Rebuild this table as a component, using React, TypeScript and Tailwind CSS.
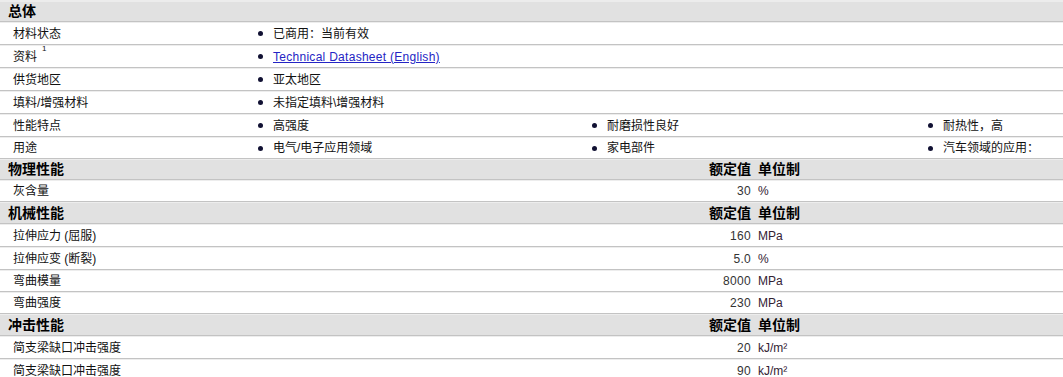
import React from "react";

const FONT = {
  fontFamily: '"Liberation Sans", Arial, "Noto Sans CJK SC", sans-serif',
};

function Dot() {
  return <span className="inline-block w-[5px] h-[5px] rounded-full bg-[#111133] mr-[10px] shrink-0" />;
}

function Row({ h, header, children }: { h: number; header?: boolean; children: React.ReactNode }) {
  return (
    <div className="flex flex-col">
      <div className="h-px bg-[#c3c3c3]" />
      <div className="h-px bg-[#ededed]" />
      <div
        className={`flex items-center ${header ? "bg-[#e1e1e1]" : "bg-white"}`}
        style={{ height: h - 2 }}
      >
        {children}
      </div>
    </div>
  );
}

function Label({ children }: { children: React.ReactNode }) {
  return <div className="w-[255px] shrink-0 pl-[13px] text-[12px] text-[#111]">{children}</div>;
}

function Bullets({ items }: { items: React.ReactNode[] }) {
  const widths = ["w-[334px]", "w-[336px]", "w-[138px]"];
  return (
    <div className="flex">
      {items.map((it, i) => (
        <div key={i} className={`${widths[i]} shrink-0 flex items-center pl-[3px] text-[12px] text-[#111]`}>
          <Dot />
          <span>{it}</span>
        </div>
      ))}
    </div>
  );
}

function SectionHeader({ title, h }: { title: string; h: number }) {
  return (
    <Row h={h} header>
      <div className="w-[255px] shrink-0 pl-[8px] text-[14px] font-bold text-black">{title}</div>
      <div className="flex text-[14px] font-bold text-black">
        <div className="w-[496px] text-right">额定值</div>
        <div className="pl-[7px]">单位制</div>
      </div>
    </Row>
  );
}

function PropRow({ label, value, unit, h }: { label: string; value: string; unit: React.ReactNode; h: number }) {
  return (
    <Row h={h}>
      <Label>{label}</Label>
      <div className="flex text-[12px] text-[#333]">
        <div className="w-[496px] text-right tracking-[0.3px]">{value}</div>
        <div className="pl-[7px] text-[#332233]">{unit}</div>
      </div>
    </Row>
  );
}

export default function App() {
  return (
    <div className="w-[1063px] h-[377px] overflow-hidden bg-white" style={FONT}>
      <div className="flex flex-col">
        <div className="h-[2px] bg-[#ececec]" />
        <div className="h-[19px] bg-[#e1e1e1] flex items-center">
          <div className="pl-[8px] text-[14px] font-bold text-black">总体</div>
        </div>
      </div>
      <Row h={23}>
        <Label>材料状态</Label>
        <Bullets items={["已商用：当前有效"]} />
      </Row>
      <Row h={23}>
        <Label>
          <span className="relative">
            资料
            <span className="absolute left-[29px] -top-[5px] text-[8px] leading-none">1</span>
          </span>
        </Label>
        <Bullets
          items={[
            <a href="#" className="text-[#2424c4] underline tracking-[0.28px]">
              Technical Datasheet (English)
            </a>,
          ]}
        />
      </Row>
      <Row h={23}>
        <Label>供货地区</Label>
        <Bullets items={["亚太地区"]} />
      </Row>
      <Row h={23}>
        <Label>填料/增强材料</Label>
        <Bullets items={["未指定填料\\增强材料"]} />
      </Row>
      <Row h={23}>
        <Label>性能特点</Label>
        <Bullets items={["高强度", "耐磨损性良好", "耐热性，高"]} />
      </Row>
      <Row h={22}>
        <Label>用途</Label>
        <Bullets items={["电气/电子应用领域", "家电部件", "汽车领域的应用："]} />
      </Row>
      <SectionHeader title="物理性能" h={21} />
      <PropRow label="灰含量" value="30" unit="%" h={22} />
      <SectionHeader title="机械性能" h={22} />
      <PropRow label="拉伸应力 (屈服)" value="160" unit="MPa" h={23} />
      <PropRow label="拉伸应变 (断裂)" value="5.0" unit="%" h={23} />
      <PropRow label="弯曲模量" value="8000" unit="MPa" h={22} />
      <PropRow label="弯曲强度" value="230" unit="MPa" h={22} />
      <SectionHeader title="冲击性能" h={22} />
      <PropRow label="简支梁缺口冲击强度" value="20" unit="kJ/m²" h={23} />
      <PropRow label="简支梁缺口冲击强度" value="90" unit="kJ/m²" h={23} />
    </div>
  );
}
